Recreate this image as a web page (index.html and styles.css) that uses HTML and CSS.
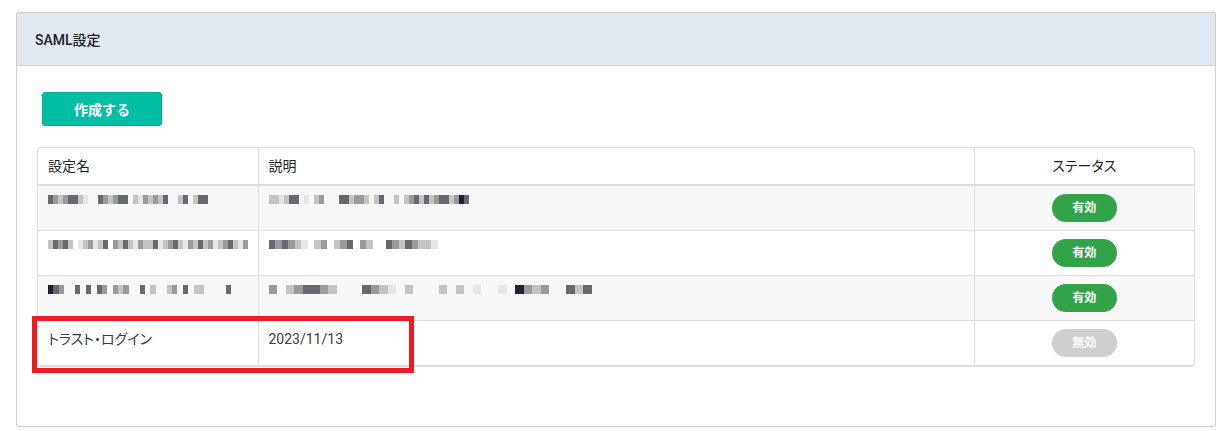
FILE: index.html
```html
<!DOCTYPE html>
<html lang="ja">
<head>
<meta charset="utf-8">
<title>SAML設定</title>
<link rel="stylesheet" href="styles.css">
</head>
<body>
<div class="card">
  <div class="card-header">SAML設定</div>
  <div class="card-body">
    <div class="actions"><button class="btn-create" type="button">作成する</button></div>
    <div class="table-wrap">
      <table class="saml-table">
        <colgroup><col class="c1"><col class="c2"><col class="c3"></colgroup>
        <thead>
          <tr><th>設定名</th><th>説明</th><th class="center">ステータス</th></tr>
        </thead>
        <tbody>
          <tr class="odd">
            <td><span class="mosaic"><i class="d"></i><i class="m"></i><i class="l"></i><i class="m"></i><i class="d"></i><i class="d"></i><i class="l"></i><i class="x"></i><i class="s"></i><i class="s"></i><i class="d"></i><i class="m"></i><i class="l"></i><i class="m"></i><i class="d"></i><i class="d"></i><i class="s"></i><i class="l"></i><i class="x"></i><i class="m"></i><i class="l"></i><i class="m"></i><i class="l"></i><i class="d"></i><i class="s"></i><i class="s"></i><i class="l"></i><i class="d"></i><i class="s"></i><i class="l"></i><i class="d"></i><i class="d"></i></span></td>
            <td><span class="mosaic"><i class="l"></i><i class="l"></i><i class="x"></i><i class="l"></i><i class="d"></i><i class="d"></i><i class="s"></i><i class="x"></i><i class="s"></i><i class="l"></i><i class="m"></i><i class="s"></i><i class="s"></i><i class="s"></i><i class="d"></i><i class="d"></i><i class="l"></i><i class="m"></i><i class="m"></i><i class="l"></i><i class="s"></i><i class="l"></i><i class="d"></i><i class="s"></i><i class="s"></i><i class="l"></i><i class="s"></i><i class="l"></i><i class="m"></i><i class="d"></i><i class="l"></i><i class="d"></i><i class="l"></i><i class="m"></i><i class="d"></i><i class="d"></i><i class="l"></i><i class="m"></i><i class="k"></i><i class="d"></i></span></td>
            <td class="center"><span class="badge on">有効</span></td>
          </tr>
          <tr>
            <td><span class="mosaic"><i class="l"></i><i class="d"></i><i class="m"></i><i class="d"></i><i class="l"></i><i class="s"></i><i class="x"></i><i class="l"></i><i class="m"></i><i class="x"></i><i class="l"></i><i class="d"></i><i class="s"></i><i class="m"></i><i class="l"></i><i class="d"></i><i class="l"></i><i class="x"></i><i class="m"></i><i class="l"></i><i class="l"></i><i class="d"></i><i class="x"></i><i class="l"></i><i class="m"></i><i class="d"></i><i class="l"></i><i class="x"></i><i class="m"></i><i class="l"></i><i class="d"></i><i class="l"></i><i class="m"></i><i class="x"></i><i class="l"></i><i class="m"></i><i class="d"></i><i class="l"></i><i class="x"></i><i class="m"></i></span></td>
            <td><span class="mosaic mid"><i class="d"></i><i class="m"></i><i class="d"></i><i class="m"></i><i class="l"></i><i class="x"></i><i class="s"></i><i class="l"></i><i class="m"></i><i class="s"></i><i class="l"></i><i class="m"></i><i class="d"></i><i class="s"></i><i class="m"></i><i class="l"></i><i class="s"></i><i class="s"></i><i class="d"></i><i class="m"></i><i class="l"></i><i class="d"></i><i class="m"></i><i class="l"></i><i class="l"></i><i class="x"></i></span></td>
            <td class="center"><span class="badge on">有効</span></td>
          </tr>
          <tr class="odd">
            <td><span class="mosaic semi"><i class="k"></i><i class="d"></i><i class="m"></i><i class="s"></i><i class="s"></i><i class="d"></i><i class="s"></i><i class="d"></i><i class="s"></i><i class="d"></i><i class="m"></i><i class="s"></i><i class="m"></i><i class="l"></i><i class="m"></i><i class="s"></i><i class="s"></i><i class="d"></i><i class="s"></i><i class="l"></i><i class="s"></i><i class="s"></i><i class="l"></i><i class="m"></i><i class="s"></i><i class="d"></i><i class="s"></i><i class="l"></i><i class="l"></i><i class="s"></i><i class="s"></i><i class="s"></i><i class="s"></i><i class="d"></i></span></td>
            <td><span class="mosaic wide"><i class="m"></i><i class="s"></i><i class="l"></i><i class="m"></i><i class="d"></i><i class="d"></i><i class="m"></i><i class="l"></i><i class="s"></i><i class="s"></i><i class="s"></i><i class="d"></i><i class="m"></i><i class="l"></i><i class="x"></i><i class="s"></i><i class="l"></i><i class="s"></i><i class="s"></i><i class="s"></i><i class="l"></i><i class="s"></i><i class="l"></i><i class="s"></i><i class="x"></i><i class="s"></i><i class="s"></i><i class="x"></i><i class="s"></i><i class="k"></i><i class="m"></i><i class="l"></i><i class="m"></i><i class="s"></i><i class="s"></i><i class="d"></i><i class="l"></i><i class="d"></i></span></td>
            <td class="center"><span class="badge on">有効</span></td>
          </tr>
          <tr>
            <td>トラスト・ログイン</td>
            <td>2023/11/13</td>
            <td class="center"><span class="badge off">無効</span></td>
          </tr>
        </tbody>
      </table>
    </div>
  </div>
</div>
<div class="highlight"></div>
</body>
</html>
```
FILE: styles.css
```css
* { box-sizing: border-box; }
html, body { margin: 0; background: #fff; }
body {
  padding: 12px 0 0 16px;
  font-family: Roboto, "Noto Sans CJK JP", sans-serif;
  font-size: 14px;
  color: #3a3a3a;
  font-feature-settings: "palt";
}
.card {
  width: 1200px;
  height: 415px;
  border: 1px solid #cfcfcf;
  border-radius: 2px;
  background: #fff;
}
.card-header {
  height: 53px;
  background: #e3e9f0;
  border-bottom: 1px solid #cdd2d8;
  padding: 0 18px;
  display: flex;
  align-items: center;
  font-size: 14px;
  font-weight: 500;
  color: #222;
}
.card-body {
  padding: 26px 20px 0 20px;
}
.actions { padding-left: 5px; }
.btn-create {
  width: 120px;
  height: 34px;
  background: #00bfa5;
  border: 1px solid #00ad95;
  border-radius: 3px;
  color: #fff;
  font-family: Roboto, "Noto Sans CJK JP", sans-serif;
  font-size: 14px;
  font-weight: 700;
  padding: 0;
}
.table-wrap {
  margin-top: 21px;
  border: 1px solid #dddddd;
  border-bottom-width: 2px;
  border-radius: 4px;
  overflow: hidden;
}
.saml-table {
  width: 100%;
  border-collapse: collapse;
  table-layout: fixed;
}
.c1 { width: 220px; }
.c2 { width: 716px; }
.saml-table th, .saml-table td {
  padding: 8px 10px;
  line-height: 20px;
  text-align: left;
  vertical-align: top;
  font-weight: 400;
  border-left: 1px solid #dddddd;
}
.saml-table th:first-child, .saml-table td:first-child { border-left: none; }
.saml-table th {
  border-bottom: 2px solid #dddddd;
  color: #222;
}
.saml-table tbody tr + tr td { border-top: 1px solid #dddddd; }
.saml-table tbody td { height: 44px; }
.saml-table tr.odd td { background: #f8f8f8; }
.saml-table .center { text-align: center; }
.saml-table td.center { vertical-align: middle; padding-top: 8px; padding-bottom: 8px; }
.badge {
  display: inline-block;
  width: 65px;
  height: 28px;
  line-height: 28px;
  border-radius: 14px;
  color: #fff;
  font-size: 12px;
  font-weight: 700;
  text-align: center;
  vertical-align: middle;
}
.badge.on { background: #33a34a; }
.badge.off { background: #cfcfcf; }
.mosaic {
  display: flex;
  height: 20px;
  align-items: flex-start;
  padding-top: 1px;
}
.mosaic i { display: block; width: 5px; height: 9px; flex: none; }
.mosaic.mid i { width: 6.5px; }
.mosaic.semi i { width: 5.4px; }
.mosaic.wide i { width: 8.5px; }
.mosaic i.k { background: #1b2230; }
.mosaic i.d { background: #666a70; }
.mosaic i.m { background: #9a9a9a; }
.mosaic i.l { background: #c4c4c4; }
.mosaic i.x { background: #e6e6e6; }
.mosaic i.s { background: transparent; }
.highlight {
  position: absolute;
  left: 32px;
  top: 316px;
  width: 382px;
  height: 57px;
  border: 5px solid #ec1c24;
}
```
